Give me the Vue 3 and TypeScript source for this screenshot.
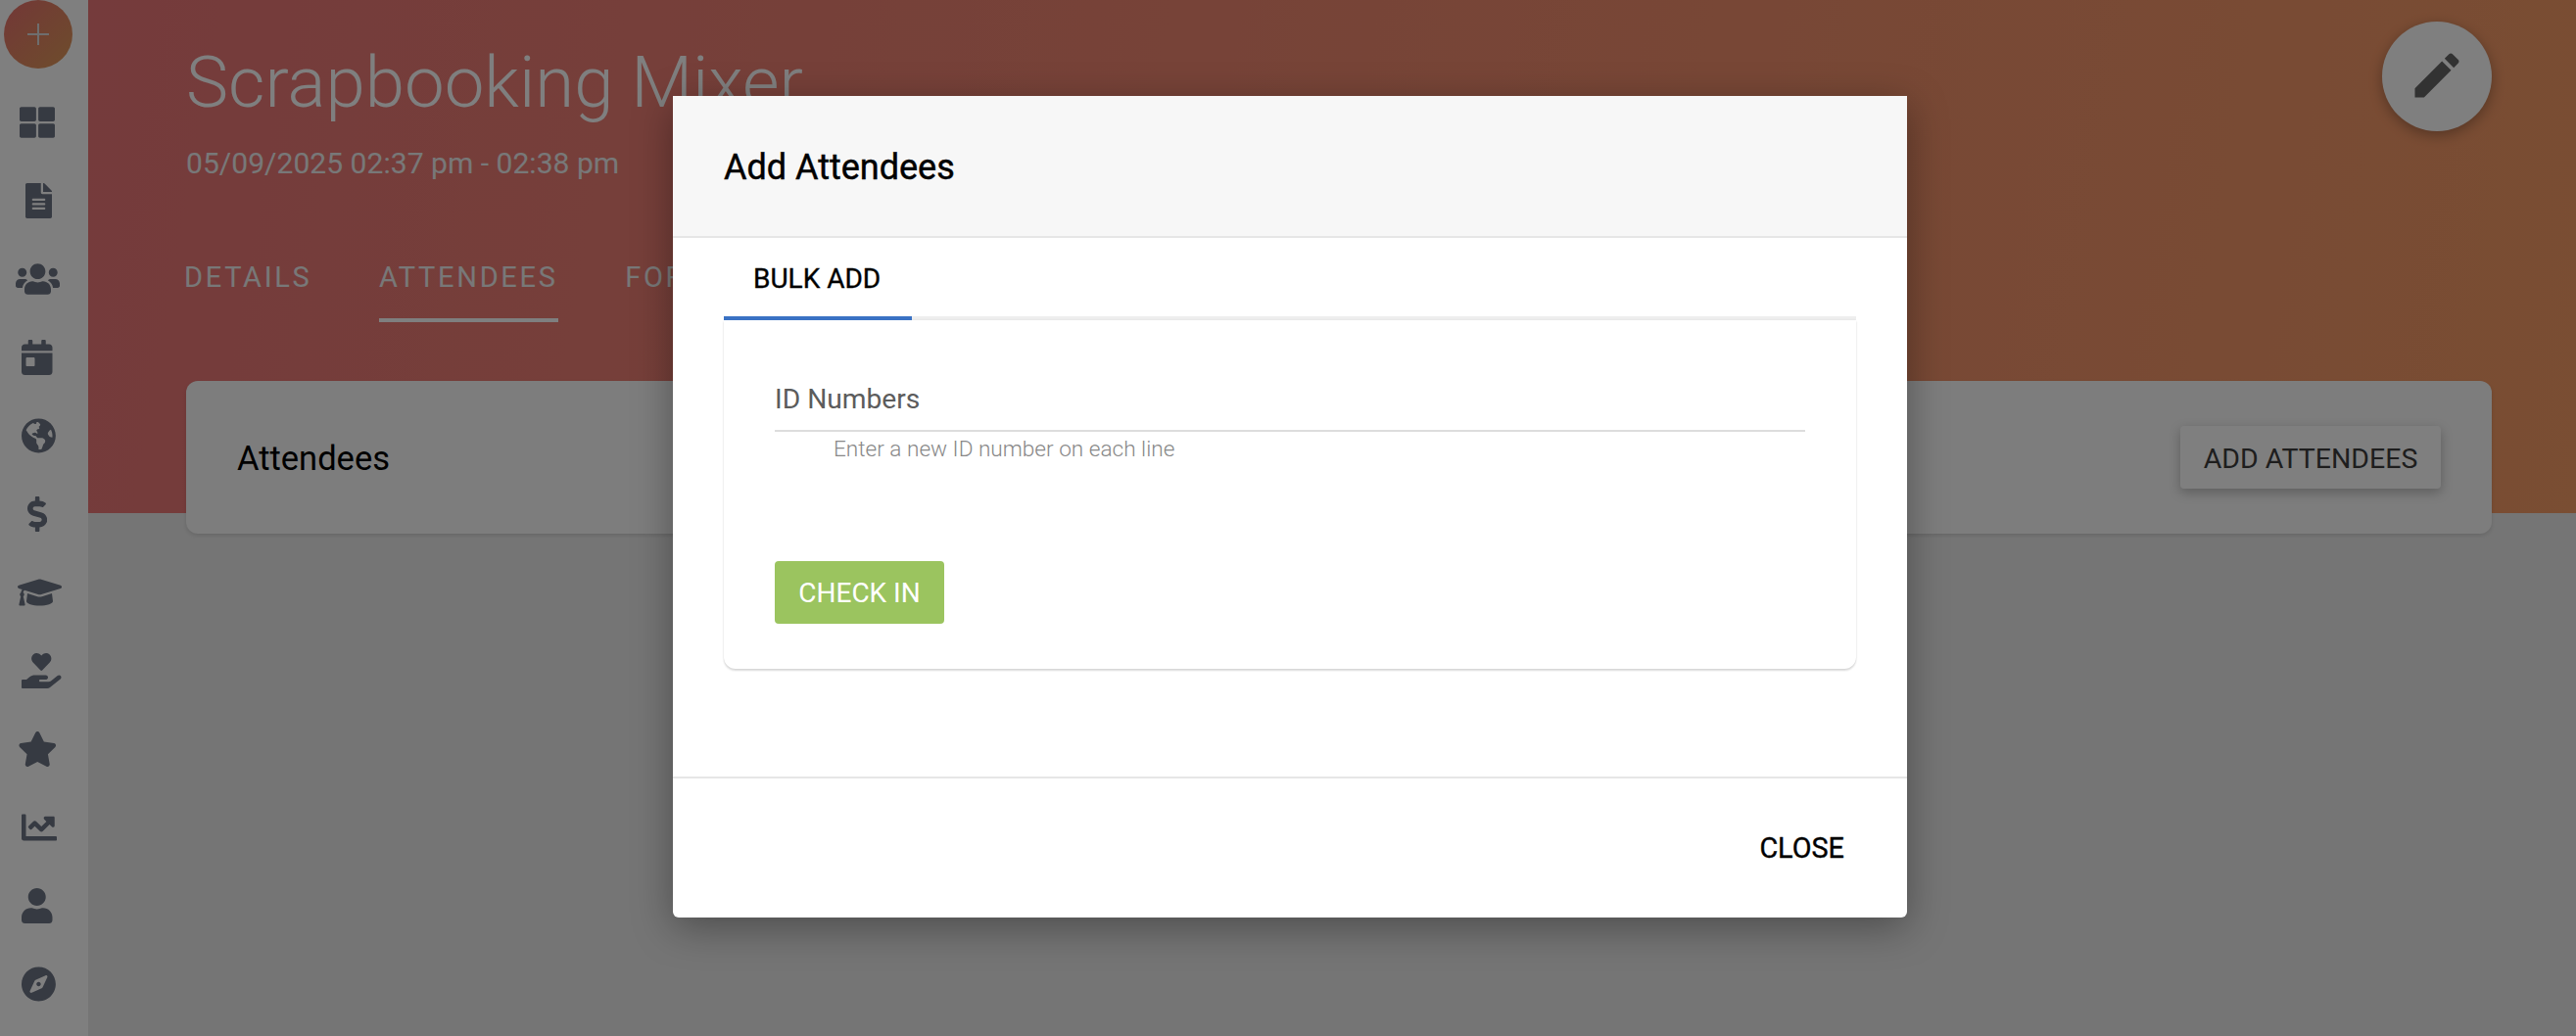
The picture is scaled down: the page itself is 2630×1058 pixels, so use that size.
<script setup lang="ts">
interface NavIcon { name: string; w: number; left: number; d: string }
const icons: NavIcon[] = [
  { name: 'th-large', w: 512, left: 20, d: 'M296 32h192c13.255 0 24 10.745 24 24v160c0 13.255-10.745 24-24 24H296c-13.255 0-24-10.745-24-24V56c0-13.255 10.745-24 24-24zm-80 0H24C10.745 32 0 42.745 0 56v160c0 13.255 10.745 24 24 24h192c13.255 0 24-10.745 24-24V56c0-13.255-10.745-24-24-24zM0 296v160c0 13.255 10.745 24 24 24h192c13.255 0 24-10.745 24-24V296c0-13.255-10.745-24-24-24H24c-13.255 0-24 10.745-24 24zm296 184h192c13.255 0 24-10.745 24-24V296c0-13.255-10.745-24-24-24H296c-13.255 0-24 10.745-24 24v160c0 13.255 10.745 24 24 24z' },
  { name: 'file-alt', w: 384, left: 26, d: 'M224 136V0H24C10.7 0 0 10.7 0 24v464c0 13.3 10.7 24 24 24h336c13.3 0 24-10.7 24-24V160H248c-13.2 0-24-10.8-24-24zm64 236c0 6.6-5.4 12-12 12H108c-6.6 0-12-5.4-12-12v-8c0-6.6 5.4-12 12-12h168c6.6 0 12 5.4 12 12v8zm0-64c0 6.6-5.4 12-12 12H108c-6.6 0-12-5.4-12-12v-8c0-6.6 5.4-12 12-12h168c6.6 0 12 5.4 12 12v8zm0-72v8c0 6.6-5.4 12-12 12H108c-6.6 0-12-5.4-12-12v-8c0-6.6 5.4-12 12-12h168c6.6 0 12 5.4 12 12zm96-114.1v6.1H256V0h6.1c6.4 0 12.5 2.5 17 7l97.9 98c4.5 4.5 7 10.6 7 16.9z' },
  { name: 'users', w: 640, left: 16, d: 'M96 224c35.3 0 64-28.7 64-64s-28.7-64-64-64-64 28.7-64 64 28.7 64 64 64zm448 0c35.3 0 64-28.7 64-64s-28.7-64-64-64-64 28.7-64 64 28.7 64 64 64zm32 32h-64c-17.6 0-33.5 7.1-45.1 18.6 40.3 22.1 68.9 62 75.1 109.4h66c17.7 0 32-14.3 32-32v-32c0-35.3-28.7-64-64-64zm-256 0c61.9 0 112-50.1 112-112S381.9 32 320 32 208 82.1 208 144s50.1 112 112 112zm76.8 32h-8.3c-20.8 10-43.9 16-68.5 16s-47.6-6-68.5-16h-8.3C179.6 288 128 339.6 128 403.2V432c0 26.5 21.5 48 48 48h288c26.5 0 48-21.5 48-48v-28.8c0-63.6-51.6-115.2-115.2-115.2zm-223.7-13.4C161.5 263.1 145.6 256 128 256H64c-35.3 0-64 28.7-64 64v32c0 17.7 14.3 32 32 32h65.9c6.3-47.4 34.9-87.3 75.2-109.4z' },
  { name: 'calendar-day', w: 448, left: 22, d: 'M0 464c0 26.5 21.5 48 48 48h352c26.5 0 48-21.5 48-48V192H0v272zm64-192c0-8.8 7.2-16 16-16h96c8.8 0 16 7.2 16 16v96c0 8.8-7.2 16-16 16H80c-8.8 0-16-7.2-16-16v-96zM400 64h-48V16c0-8.8-7.2-16-16-16h-32c-8.8 0-16 7.2-16 16v48H160V16c0-8.8-7.2-16-16-16h-32c-8.8 0-16 7.2-16 16v48H48C21.5 64 0 85.5 0 112v48h448v-48c0-26.5-21.5-48-48-48z' },
  { name: 'globe-americas', w: 496, left: 22, d: 'M248 8C111.03 8 0 119.03 0 256s111.03 248 248 248 248-111.03 248-248S384.97 8 248 8zm82.29 357.6c-3.9 3.88-7.99 7.95-11.31 11.28-2.99 3-5.1 6.7-6.17 10.71-1.51 5.66-2.73 11.38-4.77 16.87l-17.39 46.85c-13.76 3-28 4.69-42.65 4.69v-27.38c1.69-12.62-7.64-36.26-22.63-51.25-6-6-9.37-14.14-9.37-22.63v-32.01c0-11.64-6.27-22.34-16.46-27.97-14.37-7.95-34.81-19.06-48.81-26.11-11.48-5.78-22.1-13.14-31.65-21.75l-.8-.72a114.792 114.792 0 0 1-18.06-20.74c-9.38-13.77-24.66-36.42-34.59-51.14 20.47-45.5 57.36-82.04 103.2-101.89l24.01 12.01C203.48 89.74 216 82.01 216 70.11v-11.3c7.99-1.29 16.12-2.11 24.39-2.42l28.3 28.3c6.25 6.25 6.25 16.38 0 22.63L264 112l-10.34 10.34c-3.12 3.12-3.12 8.19 0 11.31l4.69 4.69c3.12 3.12 3.12 8.19 0 11.31l-8 8a8.008 8.008 0 0 1-5.66 2.34h-8.99c-2.08 0-4.08.81-5.58 2.27l-9.92 9.65a8.008 8.008 0 0 0-1.58 9.31l15.59 31.19c2.66 5.32-1.21 11.58-7.15 11.58h-5.64c-1.93 0-3.79-.7-5.24-1.96l-9.28-8.06a16.017 16.017 0 0 0-15.55-3.1l-31.17 10.39a11.95 11.95 0 0 0-8.17 11.34c0 4.53 2.56 8.66 6.61 10.69l11.08 5.54c9.41 4.71 19.79 7.16 30.31 7.16s22.59 27.29 32 32h66.75c8.49 0 16.62 3.37 22.63 9.37l13.69 13.69a30.503 30.503 0 0 1 8.93 21.57 46.536 46.536 0 0 1-13.72 32.98zM417 274.25c-5.79-1.45-10.84-5-14.15-9.97l-17.98-26.97a23.97 23.97 0 0 1 0-26.62l19.59-29.38c2.32-3.47 5.5-6.29 9.24-8.15l12.98-6.49C440.2 193.59 448 223.87 448 256c0 8.67-.74 17.16-1.82 25.54L417 274.25z' },
  { name: 'dollar-sign', w: 288, left: 28, d: 'M209.2 233.4l-108-31.6C88.7 198.2 80 186.5 80 173.5c0-16.3 13.2-29.5 29.5-29.5h66.3c12.2 0 24.2 3.7 34.2 10.5 6.1 4.1 14.3 3.1 19.5-2l34.8-34c7.1-6.9 6.1-18.4-1.8-24.5C238 74.8 207.4 64.1 176 64V16c0-8.8-7.2-16-16-16h-32c-8.8 0-16 7.2-16 16v48h-2.5C45.8 64-5.4 118.7.5 183.6c4.2 46.1 39.4 83.6 83.8 96.6l102.5 30c12.5 3.7 21.2 15.3 21.2 28.3 0 16.3-13.2 29.5-29.5 29.5h-66.3C100 368 88 364.3 78 357.5c-6.1-4.1-14.3-3.1-19.5 2l-34.8 34c-7.1 6.9-6.1 18.4 1.8 24.5 24.5 19.2 55.1 29.9 86.5 30v48c0 8.8 7.2 16 16 16h32c8.8 0 16-7.2 16-16v-48.2c46.6-.9 90.3-28.6 105.7-72.7 21.5-61.6-14.6-124.8-72.5-141.7z' },
  { name: 'graduation-cap', w: 640, left: 18, d: 'M622.34 153.2L343.4 67.5c-15.2-4.67-31.6-4.67-46.79 0L17.66 153.2c-23.54 7.23-23.54 38.36 0 45.59l48.63 14.94c-10.67 13.19-17.23 29.28-17.88 46.9C38.78 266.15 32 276.11 32 288c0 10.78 5.68 19.85 13.86 25.65L20.33 428.53C18.11 438.52 25.71 448 35.94 448h56.11c10.24 0 17.84-9.48 15.62-19.47L82.14 313.65C90.32 307.85 96 298.78 96 288c0-11.57-6.47-21.25-15.66-26.87.76-15.02 8.44-28.3 20.69-36.72L296.6 284.5c9.06 2.78 26.44 6.25 46.79 0l278.95-85.7c23.55-7.24 23.55-38.36 0-45.6zM352.79 315.09c-28.53 8.76-52.84 3.92-65.59 0l-145.02-44.55L128 384c0 35.35 85.96 64 192 64s192-28.65 192-64l-14.18-113.47-145.03 44.56z' },
  { name: 'hand-holding-heart', w: 576, left: 22, d: 'M275.3 250.5c7 7.4 18.4 7.4 25.5 0l108.9-114.2c31.6-33.2 29.8-88.2-5.6-118.8-30.8-26.7-76.7-21.9-104.9 7.7L288 36.9l-11.1-11.6C248.7-4.4 202.8-9.2 172 17.5c-35.3 30.6-37.2 85.6-5.6 118.8l108.9 114.2zm290 77.6c-11.8-10.7-30.2-10-42.6 0L430.3 402c-11.3 9.1-25.4 14-40 14H272c-8.8 0-16-7.2-16-16s7.2-16 16-16h78.3c15.9 0 30.7-10.9 33.3-26.6 3.3-20-12.1-37.4-31.6-37.4H192c-27 0-53.1 9.3-74.1 26.3L71.4 384H16c-8.8 0-16 7.2-16 16v96c0 8.8 7.2 16 16 16h356.8c14.5 0 28.6-4.9 40-14l151.2-121c15.2-12.1 16.4-35.3 1.3-48.9z' },
  { name: 'star', w: 576, left: 18, d: 'M259.3 17.8L194 150.2 47.9 171.5c-26.2 3.8-36.7 36.1-17.7 54.6l105.7 103-25 145.5c-4.5 26.3 23.2 46 46.4 33.7L288 439.6l130.7 68.7c23.2 12.2 50.9-7.4 46.4-33.7l-25-145.5 105.7-103c19-18.5 8.5-50.8-17.7-54.6L382 150.2 316.7 17.8c-11.7-23.6-45.6-23.9-57.4 0z' },
  { name: 'chart-line', w: 512, left: 22, d: 'M496 384H64V80c0-8.84-7.16-16-16-16H16C7.16 64 0 71.16 0 80v336c0 17.67 14.33 32 32 32h464c8.84 0 16-7.16 16-16v-32c0-8.84-7.16-16-16-16zM464 96H345.94c-21.38 0-32.09 25.85-16.97 40.97l32.4 32.4L288 242.75l-73.37-73.37c-12.5-12.5-32.76-12.5-45.25 0l-68.69 68.69c-6.25 6.25-6.25 16.38 0 22.63l22.62 22.62c6.25 6.25 16.38 6.25 22.63 0L192 237.25l73.37 73.37c12.5 12.5 32.76 12.5 45.25 0l96-96 32.4 32.4c15.12 15.12 40.97 4.41 40.97-16.97V112c.01-8.84-7.15-16-15.99-16z' },
  { name: 'user', w: 448, left: 22, d: 'M224 256c70.7 0 128-57.3 128-128S294.7 0 224 0 96 57.3 96 128s57.3 128 128 128zm89.6 32h-16.7c-22.2 10.2-46.9 16-72.9 16s-50.6-5.8-72.9-16h-16.7C60.2 288 0 348.2 0 422.4V464c0 26.5 21.5 48 48 48h352c26.5 0 48-21.5 48-48v-41.6c0-74.2-60.2-134.4-134.4-134.4z' },
  { name: 'compass', w: 496, left: 22, d: 'M225.38 233.37c-12.5 12.5-12.5 32.76 0 45.25 12.49 12.5 32.76 12.5 45.25 0 12.5-12.5 12.5-32.76 0-45.25-12.5-12.49-32.76-12.49-45.25 0zM248 8C111.03 8 0 119.03 0 256s111.03 248 248 248 248-111.03 248-248S384.97 8 248 8zm126.14 148.05L308.17 300.4a31.938 31.938 0 0 1-15.77 15.77l-144.34 65.97c-16.65 7.61-33.81-9.55-26.2-26.2l65.98-144.35a31.938 31.938 0 0 1 15.77-15.77l144.34-65.97c16.65-7.6 33.8 9.55 26.19 26.2z' }
]
const tabs = ['DETAILS', 'ATTENDEES', 'FORMS']
</script>

<template>
  <div class="page">
    <aside class="sidebar">
      <button class="add-btn" type="button">
        <svg viewBox="0 0 22 22" width="22" height="22"><path d="M10 0h2v10h10v2H12v10h-2V12H0v-2h10z" fill="#ddd" /></svg>
      </button>
      <nav class="nav">
        <a v-for="icon in icons" :key="icon.name" class="nav-item">
          <svg
            :viewBox="`0 0 ${icon.w} 512`"
            :width="(icon.w / 512) * 36"
            height="36"
            :style="{ marginLeft: icon.left + 'px' }"
          >
            <path :d="icon.d" fill="#6c7484" />
          </svg>
        </a>
      </nav>
    </aside>

    <main class="main">
      <header class="hero">
        <div class="hero-text">
          <h1 class="title">Scrapbooking Mixer</h1>
          <div class="date">05/09/2025 02:37 pm - 02:38 pm</div>
        </div>
        <button class="fab" type="button">
          <svg class="fab-icon" viewBox="0 0 24 24" width="60" height="60">
            <path d="M3 17.25V21h3.75L17.81 9.94l-3.75-3.75L3 17.25zM20.71 7.04c.39-.39.39-1.02 0-1.41l-2.34-2.34c-.39-.39-1.02-.39-1.41 0l-1.83 1.83 3.75 3.75 1.83-1.83z" fill="#646464" />
          </svg>
        </button>
      </header>
      <div class="tabs">
        <span v-for="t in tabs" :key="t" class="tab" :class="{ active: t === 'ATTENDEES' }">{{ t }}</span>
      </div>
      <section class="att-card">
        <h2 class="att-title">Attendees</h2>
        <button class="att-btn" type="button">ADD ATTENDEES</button>
      </section>
    </main>

    <div class="overlay">
      <div class="modal">
        <div class="modal-head">Add Attendees</div>
        <div class="modal-body">
          <div class="m-tabs">
            <span class="m-tab">BULK ADD</span>
          </div>
          <div class="m-card">
            <div class="field-label">ID Numbers</div>
            <div class="field-line"></div>
            <div class="field-hint">Enter a new ID number on each line</div>
            <button class="check-btn" type="button">CHECK IN</button>
          </div>
        </div>
        <div class="modal-foot">
          <button class="close-btn" type="button">CLOSE</button>
        </div>
      </div>
    </div>
  </div>
</template>

<style>
html, body { margin: 0; height: 100%; overflow: hidden; }
</style>

<style scoped>
.page {
  display: flex;
  width: 2630px;
  height: 1058px;
  overflow: hidden;
  position: relative;
  font-family: Roboto, "Liberation Sans", sans-serif;
}
button { font-family: inherit; border: 0; cursor: pointer; }

.sidebar {
  width: 90px;
  flex: none;
  background: #fff;
  display: flex;
  flex-direction: column;
  position: relative;
  z-index: 1;
}
.add-btn {
  width: 70px;
  height: 70px;
  margin-left: 4px;
  border-radius: 50%;
  padding: 0;
  display: flex;
  align-items: center;
  justify-content: center;
  background: linear-gradient(135deg, #e66f6e, #dc9a58);
}
.nav { display: flex; flex-direction: column; padding-top: 15px; }
.nav-item { height: 80px; display: flex; align-items: center; }

.main {
  flex: 1;
  min-width: 0;
  padding: 22px 86px 0 100px;
  background: linear-gradient(100deg, #ea7678, #f49c66) no-repeat top / 100% 524px, #ebebeb;
  box-sizing: border-box;
  display: flex;
  flex-direction: column;
}
.hero { display: flex; justify-content: space-between; align-items: flex-start; }
.title {
  margin: 21px 0 0;
  font-size: 72.6px;
  line-height: 84px;
  font-weight: 300;
  color: #fff;
}
.date {
  margin-top: 22px;
  font-size: 30.1px;
  line-height: 36px;
  font-weight: 400;
  color: #f0f0f0;
}
.fab {
  width: 112px;
  height: 112px;
  border-radius: 50%;
  background: #fff;
  display: flex;
  align-items: center;
  justify-content: center;
  padding: 0;
  box-shadow: 0 4px 14px rgba(0, 0, 0, .3);
}
.fab-icon { margin-bottom: 3px; }
.tabs { display: flex; gap: 68.5px; margin: 73px 0 0 -2px; height: 71px; }
.tab {
  font-size: 29px;
  line-height: 34px;
  font-weight: 400;
  letter-spacing: 2.7px;
  color: #f0f0f0;
  height: 71px;
  box-sizing: border-box;
  border-bottom: 4px solid transparent;
  padding-top: 8px;
}
.tab.active { border-bottom-color: #fff; }
.att-card {
  margin-top: 60px;
  height: 156px;
  box-sizing: border-box;
  background: #fafafa;
  border-radius: 12px;
  box-shadow: 0 2px 4px rgba(0, 0, 0, .12);
  display: flex;
  align-items: center;
  justify-content: space-between;
  padding: 0 52px 0 52px;
}
.att-title { margin: 0; padding-top: 2px; font-size: 34.5px; font-weight: 400; color: #000; }
.att-btn {
  width: 266px;
  height: 64px;
  border-radius: 4px;
  background: #fff;
  color: #3c3c3c;
  font-size: 28.5px;
  padding: 2px 0 0;
  box-shadow: 0 4px 12px rgba(0, 0, 0, .25);
}

.overlay {
  position: absolute;
  inset: 0;
  z-index: 5;
  background: rgba(0, 0, 0, .5);
  padding: 98px 0 0 687px;
  box-sizing: border-box;
}
.modal {
  width: 1260px;
  height: 839px;
  background: #fff;
  border-radius: 0 0 6px 6px;
  box-shadow: 0 10px 40px rgba(0, 0, 0, .35);
  display: flex;
  flex-direction: column;
}
.modal-head {
  height: 145px;
  box-sizing: border-box;
  background: #f7f7f7;
  border-bottom: 2px solid #e6e6e6;
  padding: 3px 0 0 52px;
  display: flex;
  align-items: center;
  font-size: 36px;
  font-weight: 400;
  -webkit-text-stroke: 0.45px #000;
  color: #000;
}
.modal-body { flex: 1; padding: 0 52px; }
.m-tabs {
  height: 84px;
  box-sizing: border-box;
  border-bottom: 4px solid #eee;
  display: flex;
}
.m-tab {
  width: 192px;
  height: 84px;
  box-sizing: border-box;
  padding: 26px 0 0 30px;
  font-size: 28px;
  line-height: 32px;
  font-weight: 400;
  -webkit-text-stroke: 0.35px #000;
  color: #000;
  border-bottom: 4px solid #3a72c4;
}
.m-card {
  height: 356px;
  box-sizing: border-box;
  border-radius: 0 0 12px 12px;
  box-shadow: 0 2px 2px rgba(0, 0, 0, .14), 0 0 2px rgba(0, 0, 0, .08);
  padding: 65px 52px 0;
}
.field-label { font-size: 28.2px; line-height: 32px; color: #5c5c5c; }
.field-line { height: 2px; background: #ddd; margin-top: 15px; }
.field-hint {
  margin: 5px 0 0 60px;
  font-size: 22.6px;
  line-height: 26px;
  font-weight: 300;
  color: #888;
}
.check-btn {
  display: block;
  margin-top: 101px;
  width: 173px;
  height: 64px;
  border-radius: 4px;
  background: #9bc45f;
  color: #fff;
  font-size: 28px;
  padding: 1px 0 0;
}
.modal-foot {
  height: 144px;
  box-sizing: border-box;
  border-top: 2px solid #e6e6e6;
  display: flex;
  justify-content: flex-end;
  align-items: center;
  padding-right: 64px;
}
.close-btn {
  background: none;
  font-size: 28.8px;
  font-weight: 400;
  -webkit-text-stroke: 0.35px #000;
  color: #000;
  padding: 0;
}
</style>
